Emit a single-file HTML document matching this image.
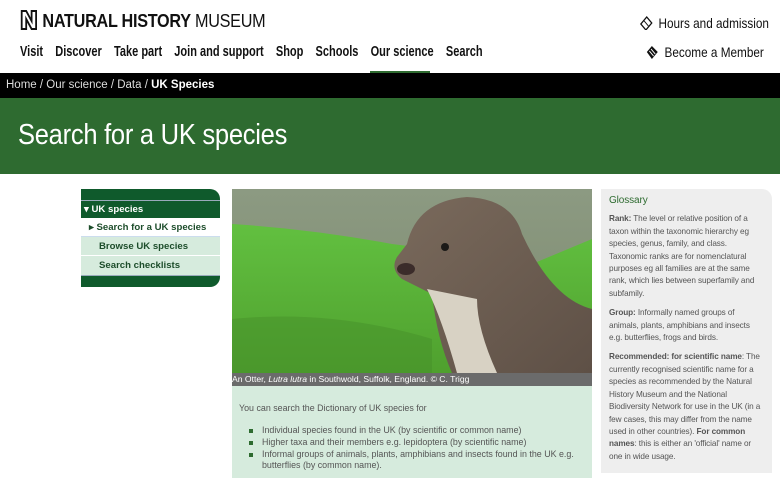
<!DOCTYPE html>
<html><head><meta charset="utf-8"><style>
*{margin:0;padding:0;box-sizing:border-box}
body{width:780px;height:478px;overflow:hidden;background:#fff;font-family:"Liberation Sans",Arial,sans-serif;position:relative}
.a{position:absolute}
.logo{left:19px;top:9px;font-size:18px;color:#111;letter-spacing:-0.3px;white-space:nowrap;transform:scaleX(0.9);transform-origin:left}
.nav{top:44px;left:20px;font-size:14.5px;color:#111;white-space:nowrap;transform:scaleX(0.76);transform-origin:left;font-weight:bold}
.nav span{margin-right:16px}
.bc{top:73px;left:0;width:780px;height:25px;background:#000;color:#ddd;font-size:11.5px;padding:6px 6px}
.hd{top:98px;left:0;width:780px;height:76px;background:#2e6b30;color:#fff;font-size:29px;padding:21px 18px;letter-spacing:-0.3px}
.hd span{display:inline-block;transform:scaleX(0.88);transform-origin:left}
.sb{left:81px;top:189px;width:139px}
.gl{left:601px;top:189px;width:171px;height:284px;background:#eeeeee;border-top-right-radius:10px;padding:6px 8px;font-size:8.2px;letter-spacing:-0.1px;color:#555;line-height:12.4px}
.gl b{color:#555}
.gl p{margin-bottom:7px}
.txt{left:232px;top:386px;width:360px;height:92px;background:#d6ebdd;padding:17px 7px;font-size:8.9px;color:#555}
.txt ul{list-style:none;margin-top:12px;padding-left:10px}
.txt li{position:relative;padding-left:13px;line-height:11px;margin-bottom:1px}
.txt li:before{content:"";position:absolute;left:0;top:4px;width:4px;height:4px;background:#2e6b30}
.sbr{font-weight:bold;font-size:9.6px}
</style></head><body>
<div class="a logo"><svg width="22" height="22" viewBox="0 0 22 22" style="vertical-align:-4px;margin-right:4px"><path d="M3 2h5l6 10V2h5v18h-5L8 10v10H3z" fill="none" stroke="#111" stroke-width="2"/></svg><b style="font-weight:900">NATURAL HISTORY</b> MUSEUM</div>
<div class="a nav"><span>Visit</span><span>Discover</span><span>Take part</span><span>Join and support</span><span>Shop</span><span>Schools</span><span>Our science</span><span>Search</span></div>
<div class="a" style="left:370px;top:71px;width:60px;height:3px;background:#2e6b30"></div>
<div class="a" style="left:640px;top:15px;font-size:14px;color:#111;white-space:nowrap;transform:scaleX(0.84);transform-origin:left"><svg width="15" height="14" viewBox="0 0 15 14" style="vertical-align:-2px;margin-right:7px"><path d="M1 8L8 1l6 6-7 7z" fill="none" stroke="#111" stroke-width="1.4"/><path d="M5 5l5 5" stroke="#111" stroke-width="1"/></svg>Hours and admission</div>
<div class="a" style="left:646px;top:44px;font-size:14px;color:#111;white-space:nowrap;transform:scaleX(0.84);transform-origin:left"><svg width="15" height="14" viewBox="0 0 15 14" style="vertical-align:-2px;margin-right:7px"><path d="M1 7L7 1l7 6-7 7z" fill="#111"/><path d="M4 6l5 5M6 4l5 5" stroke="#fff" stroke-width="1"/></svg>Become a Member</div>
<div class="a bc">Home / Our science / Data / <b style="color:#fff">UK Species</b></div>
<div class="a hd"><span>Search for a UK species</span></div>
<div class="a sb">
<div style="height:12px;background:#0f5a2c;border-top-right-radius:10px;border-bottom:1px solid #9ab"></div>
<div class="sbr" style="height:17px;background:#0f5a2c;color:#fff;padding:3px 3px">▾ UK species</div>
<div class="sbr" style="height:19px;background:#fff;color:#1d4d2b;padding:4px 8px;border-bottom:1px solid #cde">▸ Search for a UK species</div>
<div class="sbr" style="height:19px;background:#d6ebdd;color:#1d4d2b;padding:4px 18px;border-bottom:1px solid #fff">Browse UK species</div>
<div class="sbr" style="height:19px;background:#d6ebdd;color:#1d4d2b;padding:4px 18px">Search checklists</div>
<div style="height:12px;background:#0f5a2c;border-bottom-right-radius:10px;border-top:1px solid #9ab"></div>
</div>
<svg class="a" style="left:232px;top:189px" width="360" height="184" viewBox="0 0 360 184">
<defs><linearGradient id="w" x1="0" y1="0" x2="0" y2="1"><stop offset="0" stop-color="#8c9a82"/><stop offset="1" stop-color="#7d8a6e"/></linearGradient>
<linearGradient id="g" x1="0" y1="0" x2="0" y2="1"><stop offset="0" stop-color="#62c040"/><stop offset="1" stop-color="#4fa02e"/></linearGradient>
<linearGradient id="o" x1="0" y1="0" x2="1" y2="1"><stop offset="0" stop-color="#7a6a5c"/><stop offset="1" stop-color="#5e5046"/></linearGradient></defs>
<rect width="360" height="184" fill="url(#w)"/>
<path d="M0 35 Q80 40 160 55 L200 60 L300 75 L360 50 V184 H0Z" fill="url(#g)"/>
<path d="M0 130 Q100 120 200 150 L200 184 H0Z" fill="#46902a" opacity=".5"/>
<path d="M175 55 Q185 12 235 8 Q280 10 290 45 Q320 110 360 120 V184 H220 Q205 150 200 105 L170 90 Q158 80 165 68Z" fill="url(#o)"/>
<path d="M195 100 Q210 130 225 184 H265 Q245 140 245 110 Q220 105 195 100Z" fill="#d8d2c4"/>
<circle cx="213" cy="58" r="4" fill="#1c1a18"/>
<ellipse cx="174" cy="80" rx="9" ry="6" fill="#3b2c2a"/>
</svg>
<div class="a" style="left:232px;top:373px;width:360px;height:13px;background:#6b6b6b;color:#fff;font-size:8.6px;padding:1px 0">An Otter, <i>Lutra lutra</i> in Southwold, Suffolk, England. © C. Trigg</div>
<div class="a txt">You can search the Dictionary of UK species for
<ul><li>Individual species found in the UK (by scientific or common name)</li><li>Higher taxa and their members e.g. lepidoptera (by scientific name)</li><li>Informal groups of animals, plants, amphibians and insects found in the UK e.g. butterflies (by common name).</li></ul></div>
<div class="a gl"><div style="font-size:10px;color:#2e6b30;margin-bottom:6px">Glossary</div>
<p><b>Rank:</b> The level or relative position of a taxon within the taxonomic hierarchy eg species, genus, family, and class. Taxonomic ranks are for nomenclatural purposes eg all families are at the same rank, which lies between superfamily and subfamily.</p>
<p><b>Group:</b> Informally named groups of animals, plants, amphibians and insects e.g. butterflies, frogs and birds.</p>
<p><b>Recommended: for scientific name</b>: The currently recognised scientific name for a species as recommended by the Natural History Museum and the National Biodiversity Network for use in the UK (in a few cases, this may differ from the name used in other countries). <b>For common names</b>: this is either an 'official' name or one in wide usage.</p></div>
</body></html>
